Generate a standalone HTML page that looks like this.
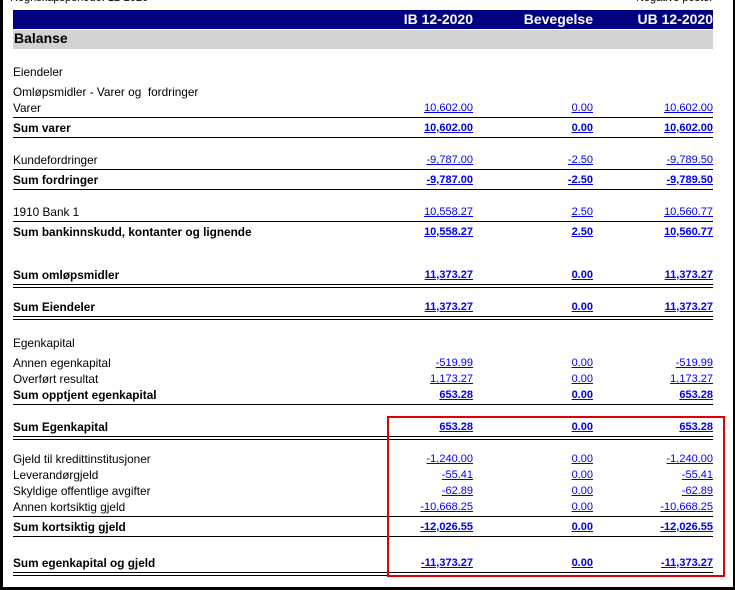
<!DOCTYPE html>
<html><head><meta charset="utf-8"><style>
*{margin:0;padding:0;box-sizing:border-box}
body{width:735px;height:590px;position:relative;background:#fff;font-family:"Liberation Sans",Arial,sans-serif;font-size:11px;color:#000;overflow:hidden}
.frame{position:absolute;left:0;top:-5px;width:735px;height:595px;border:2px solid #000;border-left-width:3px;border-bottom-width:3px}
.t{position:absolute;line-height:14px;white-space:nowrap;margin-top:1px}
.l{left:13px;font-size:11.8px}
.n{color:#0000ee;text-decoration:underline}
.a{right:262px}.b{right:142px}.c{right:22px}
.bo{font-weight:bold}
.hl{position:absolute;left:13px;width:700px;height:1px;background:#000}
.dl{position:absolute;left:13px;width:700px;height:4px;border-top:1px solid #000;border-bottom:1px solid #000}
.hdr{position:absolute;left:13px;top:10px;width:700px;height:19px;background:#000080;color:#fff;font-weight:bold;font-size:14px}
.hdr span{position:absolute;top:1px;line-height:17px}
.gray{position:absolute;left:13px;top:30px;width:700px;height:19px;background:#d3d3d3;font-weight:bold;font-size:14px;line-height:17px;padding-left:1px}
.red{position:absolute;left:387px;top:416px;width:338px;height:161px;border:2px solid #e00000}
</style></head><body>
<div class="frame"></div>
<div class="t" style="left:10px;top:-10px;font-size:11px">Regnskapsperiode: 12-2020</div>
<div class="t" style="right:22px;top:-10px;font-size:11px">Negative poster</div>
<div class="hdr"><span style="right:240px">IB 12-2020</span><span style="right:120px">Bevegelse</span><span style="right:0">UB 12-2020</span></div>
<div class="gray">Balanse</div>

<div class="t l" style="top:64px">Eiendeler</div>
<div class="t l" style="top:84px">Omløpsmidler - Varer og&nbsp; fordringer</div>

<div class="t l" style="top:100px">Varer</div>
<div class="t n a" style="top:100px">10,602.00</div><div class="t n b" style="top:100px">0.00</div><div class="t n c" style="top:100px">10,602.00</div>
<div class="hl" style="top:117px"></div>
<div class="t l bo" style="top:120px">Sum varer</div>
<div class="t n a bo" style="top:120px">10,602.00</div><div class="t n b bo" style="top:120px">0.00</div><div class="t n c bo" style="top:120px">10,602.00</div>
<div class="hl" style="top:137px"></div>

<div class="t l" style="top:152px">Kundefordringer</div>
<div class="t n a" style="top:152px">-9,787.00</div><div class="t n b" style="top:152px">-2.50</div><div class="t n c" style="top:152px">-9,789.50</div>
<div class="hl" style="top:169px"></div>
<div class="t l bo" style="top:172px">Sum fordringer</div>
<div class="t n a bo" style="top:172px">-9,787.00</div><div class="t n b bo" style="top:172px">-2.50</div><div class="t n c bo" style="top:172px">-9,789.50</div>
<div class="hl" style="top:189px"></div>

<div class="t l" style="top:204px">1910 Bank 1</div>
<div class="t n a" style="top:204px">10,558.27</div><div class="t n b" style="top:204px">2.50</div><div class="t n c" style="top:204px">10,560.77</div>
<div class="hl" style="top:221px"></div>
<div class="t l bo" style="top:224px">Sum bankinnskudd, kontanter og lignende</div>
<div class="t n a bo" style="top:224px">10,558.27</div><div class="t n b bo" style="top:224px">2.50</div><div class="t n c bo" style="top:224px">10,560.77</div>

<div class="t l bo" style="top:267px">Sum omløpsmidler</div>
<div class="t n a bo" style="top:267px">11,373.27</div><div class="t n b bo" style="top:267px">0.00</div><div class="t n c bo" style="top:267px">11,373.27</div>
<div class="dl" style="top:284px"></div>

<div class="t l bo" style="top:299px">Sum Eiendeler</div>
<div class="t n a bo" style="top:299px">11,373.27</div><div class="t n b bo" style="top:299px">0.00</div><div class="t n c bo" style="top:299px">11,373.27</div>
<div class="dl" style="top:316px"></div>

<div class="t l" style="top:335px">Egenkapital</div>
<div class="t l" style="top:355px">Annen egenkapital</div>
<div class="t n a" style="top:355px">-519.99</div><div class="t n b" style="top:355px">0.00</div><div class="t n c" style="top:355px">-519.99</div>
<div class="t l" style="top:371px">Overført resultat</div>
<div class="t n a" style="top:371px">1,173.27</div><div class="t n b" style="top:371px">0.00</div><div class="t n c" style="top:371px">1,173.27</div>
<div class="t l bo" style="top:387px">Sum opptjent egenkapital</div>
<div class="t n a bo" style="top:387px">653.28</div><div class="t n b bo" style="top:387px">0.00</div><div class="t n c bo" style="top:387px">653.28</div>
<div class="hl" style="top:404px"></div>

<div class="t l bo" style="top:419px">Sum Egenkapital</div>
<div class="t n a bo" style="top:419px">653.28</div><div class="t n b bo" style="top:419px">0.00</div><div class="t n c bo" style="top:419px">653.28</div>
<div class="dl" style="top:436px"></div>

<div class="t l" style="top:451px">Gjeld til kredittinstitusjoner</div>
<div class="t n a" style="top:451px">-1,240.00</div><div class="t n b" style="top:451px">0.00</div><div class="t n c" style="top:451px">-1,240.00</div>
<div class="t l" style="top:467px">Leverandørgjeld</div>
<div class="t n a" style="top:467px">-55.41</div><div class="t n b" style="top:467px">0.00</div><div class="t n c" style="top:467px">-55.41</div>
<div class="t l" style="top:483px">Skyldige offentlige avgifter</div>
<div class="t n a" style="top:483px">-62.89</div><div class="t n b" style="top:483px">0.00</div><div class="t n c" style="top:483px">-62.89</div>
<div class="t l" style="top:499px">Annen kortsiktig gjeld</div>
<div class="t n a" style="top:499px">-10,668.25</div><div class="t n b" style="top:499px">0.00</div><div class="t n c" style="top:499px">-10,668.25</div>
<div class="hl" style="top:516px"></div>
<div class="t l bo" style="top:519px">Sum kortsiktig gjeld</div>
<div class="t n a bo" style="top:519px">-12,026.55</div><div class="t n b bo" style="top:519px">0.00</div><div class="t n c bo" style="top:519px">-12,026.55</div>
<div class="hl" style="top:536px"></div>

<div class="t l bo" style="top:555px">Sum egenkapital og gjeld</div>
<div class="t n a bo" style="top:555px">-11,373.27</div><div class="t n b bo" style="top:555px">0.00</div><div class="t n c bo" style="top:555px">-11,373.27</div>
<div class="dl" style="top:572px"></div>

<div class="red"></div>
</body></html>
